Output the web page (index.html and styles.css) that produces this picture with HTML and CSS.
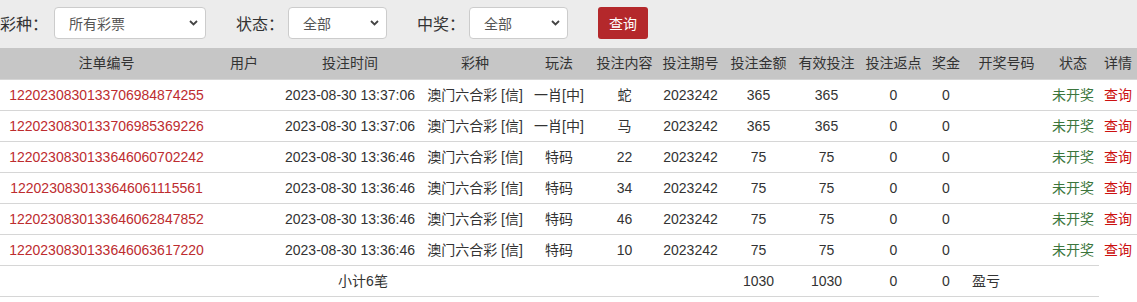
FILE: index.html
```html
<!DOCTYPE html>
<html lang="zh-CN">
<head>
<meta charset="utf-8">
<title>注单查询</title>
<link rel="stylesheet" href="styles.css">
</head>
<body>
<div class="filters">
  <span class="label first">彩种：</span>
  <div class="select w-lottery"><span>所有彩票</span><svg class="chev" width="9" height="6" viewBox="0 0 9 6"><path d="M1 1 L4.5 4.5 L8 1" fill="none" stroke="#444" stroke-width="1.8"/></svg></div>
  <span class="label">状态：</span>
  <div class="select w-small"><span>全部</span><svg class="chev" width="9" height="6" viewBox="0 0 9 6"><path d="M1 1 L4.5 4.5 L8 1" fill="none" stroke="#444" stroke-width="1.8"/></svg></div>
  <span class="label">中奖：</span>
  <div class="select w-small"><span>全部</span><svg class="chev" width="9" height="6" viewBox="0 0 9 6"><path d="M1 1 L4.5 4.5 L8 1" fill="none" stroke="#444" stroke-width="1.8"/></svg></div>
  <button class="btn">查询</button>
</div>
<table class="grid">
  <colgroup>
    <col style="width:213px"><col style="width:62px"><col style="width:150px"><col style="width:100px">
    <col style="width:68px"><col style="width:63px"><col style="width:69px"><col style="width:67px">
    <col style="width:69px"><col style="width:65px"><col style="width:40px"><col style="width:81px">
    <col style="width:52px"><col style="width:38px">
  </colgroup>
  <thead>
    <tr><th>注单编号</th><th>用户</th><th>投注时间</th><th>彩种</th><th>玩法</th><th>投注内容</th><th>投注期号</th><th>投注金额</th><th>有效投注</th><th>投注返点</th><th>奖金</th><th>开奖号码</th><th>状态</th><th>详情</th></tr>
  </thead>
  <tbody>
    <tr><td class="no">1220230830133706984874255</td><td></td><td>2023-08-30 13:37:06</td><td>澳门六合彩 [信]</td><td>一肖[中]</td><td>蛇</td><td>2023242</td><td>365</td><td>365</td><td>0</td><td>0</td><td></td><td class="st">未开奖</td><td class="q">查询</td></tr>
    <tr><td class="no">1220230830133706985369226</td><td></td><td>2023-08-30 13:37:06</td><td>澳门六合彩 [信]</td><td>一肖[中]</td><td>马</td><td>2023242</td><td>365</td><td>365</td><td>0</td><td>0</td><td></td><td class="st">未开奖</td><td class="q">查询</td></tr>
    <tr><td class="no">1220230830133646060702242</td><td></td><td>2023-08-30 13:36:46</td><td>澳门六合彩 [信]</td><td>特码</td><td>22</td><td>2023242</td><td>75</td><td>75</td><td>0</td><td>0</td><td></td><td class="st">未开奖</td><td class="q">查询</td></tr>
    <tr><td class="no">1220230830133646061115561</td><td></td><td>2023-08-30 13:36:46</td><td>澳门六合彩 [信]</td><td>特码</td><td>34</td><td>2023242</td><td>75</td><td>75</td><td>0</td><td>0</td><td></td><td class="st">未开奖</td><td class="q">查询</td></tr>
    <tr><td class="no">1220230830133646062847852</td><td></td><td>2023-08-30 13:36:46</td><td>澳门六合彩 [信]</td><td>特码</td><td>46</td><td>2023242</td><td>75</td><td>75</td><td>0</td><td>0</td><td></td><td class="st">未开奖</td><td class="q">查询</td></tr>
    <tr><td class="no">1220230830133646063617220</td><td></td><td>2023-08-30 13:36:46</td><td>澳门六合彩 [信]</td><td>特码</td><td>10</td><td>2023242</td><td>75</td><td>75</td><td>0</td><td>0</td><td></td><td class="st">未开奖</td><td class="q">查询</td></tr>
    <tr class="sum"><td></td><td colspan="3" class="sum-label">小计6笔</td><td colspan="3"></td><td>1030</td><td>1030</td><td>0</td><td>0</td><td colspan="2" class="pl">盈亏</td></tr>
  </tbody>
</table>
</body>
</html>
```
FILE: styles.css
```css
html, body {
  margin: 0;
  padding: 0;
  background: #ffffff;
  font-family: "Liberation Sans", "Noto Sans CJK SC", sans-serif;
  color: #333333;
}

.filters {
  display: flex;
  align-items: center;
  height: 48px;
  box-sizing: border-box;
  padding-bottom: 2px;
  background: #ececec;
}

.label {
  font-size: 16px;
  color: #333333;
  margin-right: 4px;
  white-space: nowrap;
}

.label.first { margin-right: 6px; }

.select {
  display: flex;
  align-items: center;
  justify-content: space-between;
  box-sizing: border-box;
  height: 32px;
  padding: 0 7px 0 14px;
  background: #ffffff;
  border: 1px solid #cccccc;
  border-radius: 4px;
  font-size: 14px;
  color: #555555;
  margin-right: 30px;
}

.w-lottery { width: 152px; }
.w-small { width: 99px; }

.chev { display: block; }

.btn {
  height: 32px;
  width: 50px;
  padding: 0;
  border: none;
  border-radius: 3px;
  background: #b4282b;
  color: #ffffff;
  font-family: "Liberation Sans", "Noto Sans CJK SC", sans-serif;
  font-size: 14px;
}

.grid {
  width: 100%;
  table-layout: fixed;
  border-collapse: separate;
  border-spacing: 0;
  font-size: 14px;
}

.grid th {
  background: #c6c6c6;
  font-weight: normal;
  color: #333333;
  line-height: 31px;
  padding: 0;
  text-align: center;
  white-space: nowrap;
}

.grid td {
  border-top: 1px solid #d6d6d6;
  line-height: 30px;
  padding: 0;
  text-align: center;
  white-space: nowrap;
  color: #333333;
}

.grid td.no { color: #bd2c2f; }
.grid td.st { color: #3c763d; }
.grid td.q { color: #cc1111; }

.grid tr.sum td { border-bottom: 1px solid #d6d6d6; }
.grid td.sum-label { padding-right: 12px; }
.grid td.pl { text-align: left; padding-left: 6px; }
```
